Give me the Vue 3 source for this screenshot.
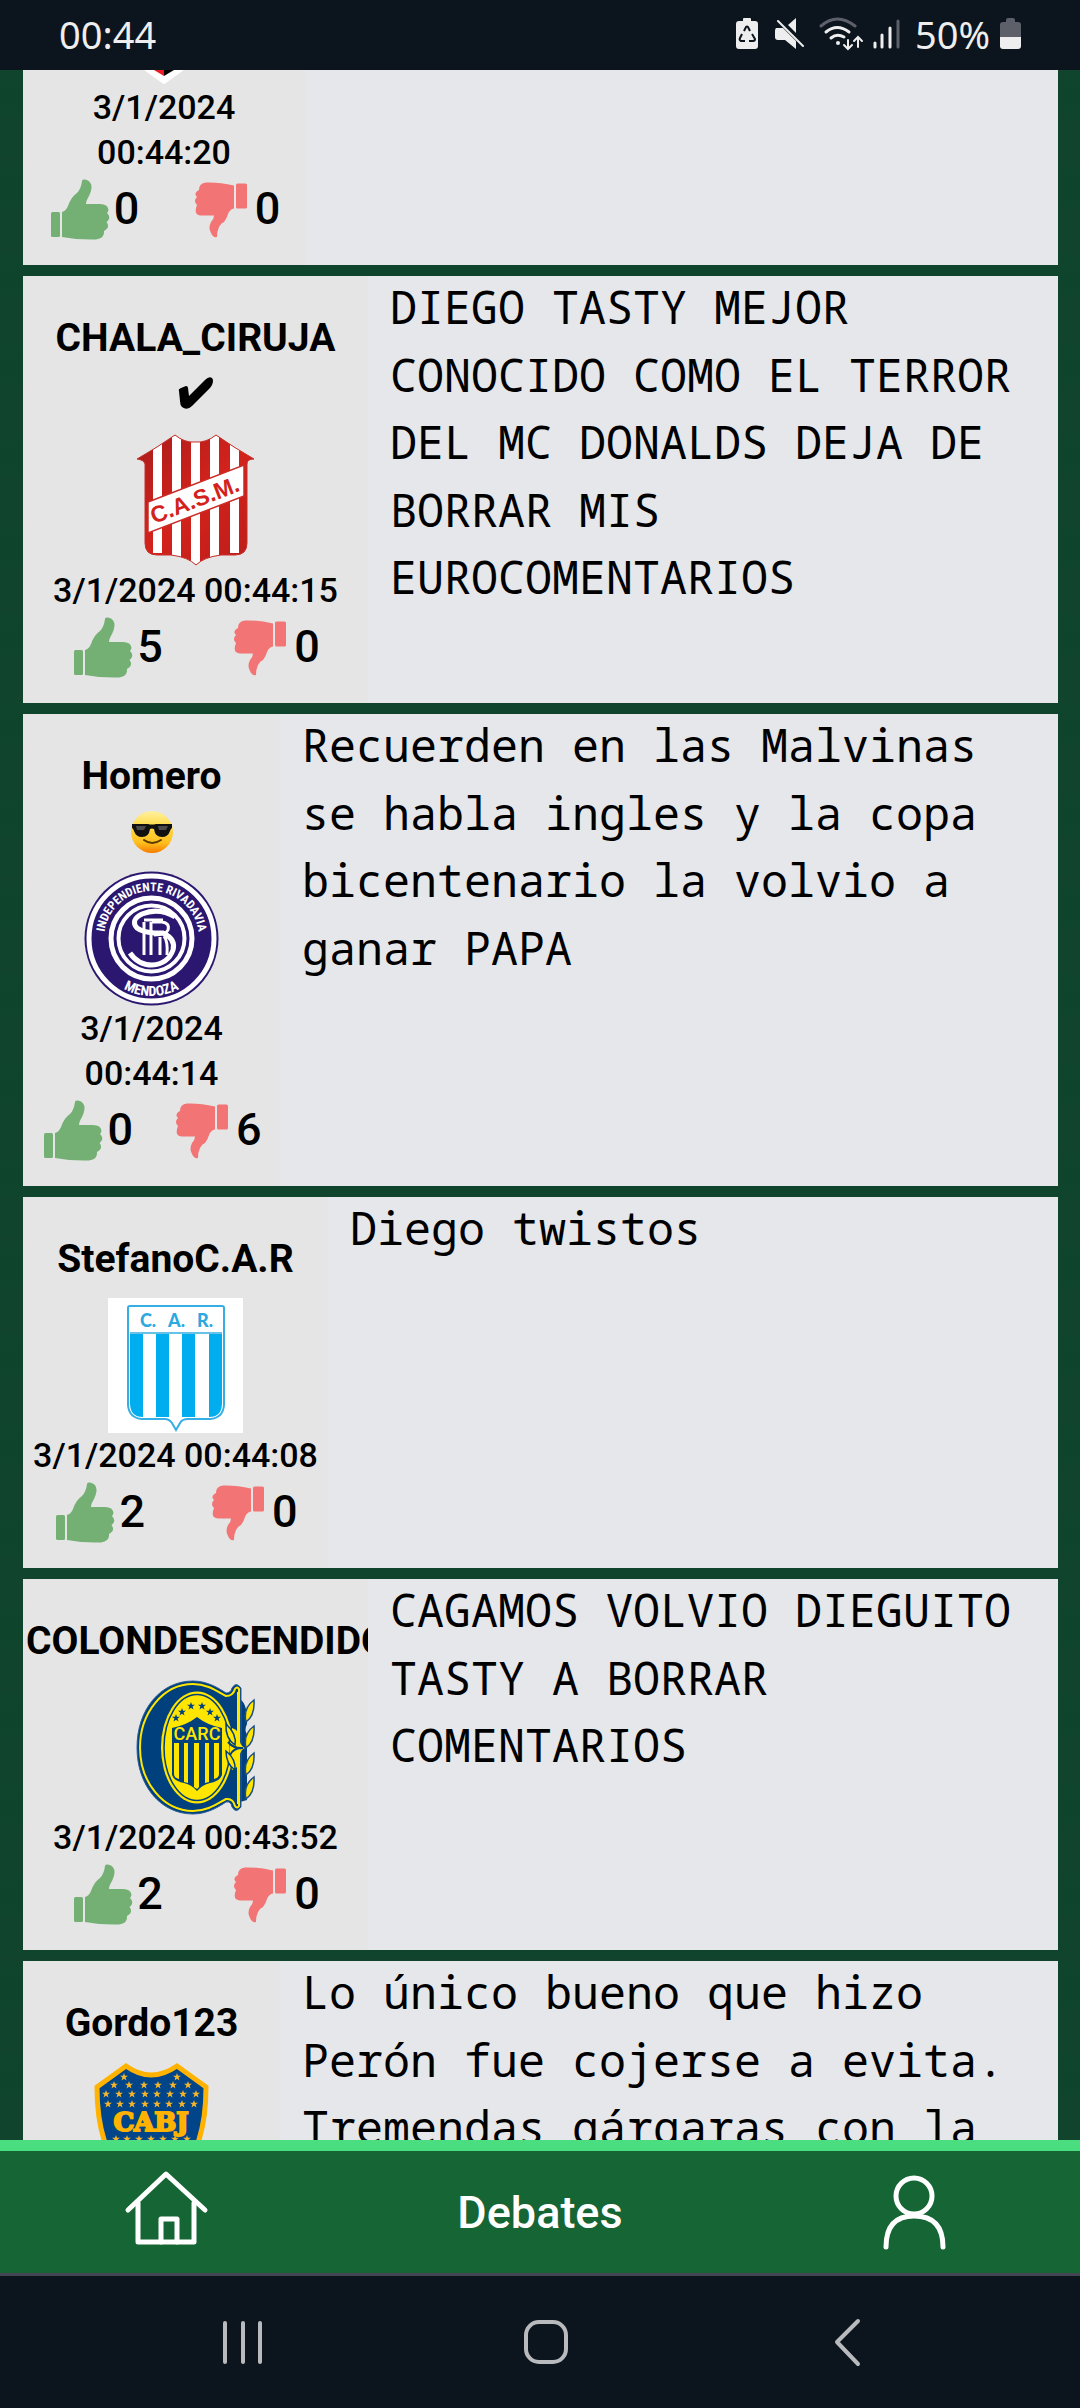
<script setup>
const posts = [
  { id: 1, crest: 'tip', date: '3/1/2024 00:44:20', up: 0, down: 0, size: 'medium', text: '' },
  {
    id: 2, name: 'CHALA_CIRUJA', badge: 'check', crest: 'casm', date: '3/1/2024 00:44:15', up: 5, down: 0, size: 'full',
    text: 'DIEGO TASTY MEJOR CONOCIDO COMO EL TERROR DEL MC DONALDS DEJA DE BORRAR MIS EUROCOMENTARIOS',
  },
  {
    id: 3, name: 'Homero', badge: 'cool', crest: 'rivadavia', date: '3/1/2024 00:44:14', up: 0, down: 6, size: 'small',
    text: 'Recuerden en las Malvinas se habla ingles y la copa bicentenario la volvio a ganar PAPA',
  },
  { id: 4, name: 'StefanoC.A.R', crest: 'car', date: '3/1/2024 00:44:08', up: 2, down: 0, size: 'large', text: 'Diego twistos' },
  {
    id: 5, name: 'COLONDESCENDIDO', crest: 'carc', date: '3/1/2024 00:43:52', up: 2, down: 0, size: 'full',
    text: 'CAGAMOS VOLVIO DIEGUITO TASTY A BORRAR COMENTARIOS',
  },
  {
    id: 6, name: 'Gordo123', crest: 'boca', date: '', up: null, down: null, size: 'small',
    text: 'Lo único bueno que hizo Perón fue cojerse a evita. Tremendas gárgaras con la',
  },
]

const star = 'M0 -4L1 -1.3L4 -1.2L1.6 .6L2.5 3.5L0 1.8L-2.5 3.5L-1.6 .6L-4 -1.2L-1 -1.3Z'
const carcStars = [[48, 38], [54, 32], [63, 26], [74, 26], [82, 32], [89, 38]]
const row = (y, xs) => xs.map((x) => [x, y])
const bocaStars = [
  ...row(15, [40, 93]),
  ...row(23, [30, 45, 60, 74, 89, 104]),
  ...row(32, [22, 35, 48, 61, 73, 86, 99, 112]),
  ...row(42, [24, 36, 48, 61, 73, 85, 98, 110]),
  ...row(77, [32, 43, 55, 67, 79, 91, 103]),
]
</script>

<template>
  <div class="phone">
    <header class="status">
      <time class="clock">00:44</time>
      <div class="indicators">
        <svg width="24" height="34" viewBox="0 0 24 34" aria-hidden="true">
          <path d="M7 4V2q0-1 1-1h6q1 0 1 1v2h4q3 0 3 3v22q0 3-3 3H3q-3 0-3-3V7q0-3 3-3z" fill="#eee" />
          <g fill="none" stroke="#0c141d" stroke-width="2">
            <path d="M8 14l2-4q1-1 2 0l2 4" />
            <path d="M16 17l3 5q0 2-2 2h-4" />
            <path d="M9 24H5q-2-1-1-3l2-4" />
          </g>
        </svg>
        <svg width="29" height="34" viewBox="0 0 29 34" aria-hidden="true">
          <path d="M13 8l8-7v15z" fill="#eee" />
          <path d="M3 4l25 25" stroke="#eee" stroke-width="2" stroke-linecap="round" />
          <path d="M1 11h7l13 13v8l-11-9H3q-3 0-3-3v-6q0-2 1-3z" fill="#eee" />
        </svg>
        <svg width="81" height="34" viewBox="0 0 81 34" fill="none" stroke="#eee" stroke-width="3" stroke-linecap="round" aria-hidden="true">
          <path d="M2 9Q18-5 36 9" stroke="#5d6068" />
          <path d="M7 15q11-9 23 0" />
          <path d="M12 21q6-5 13-1" />
          <circle cx="19" cy="26" r="2" fill="#eee" stroke="none" />
          <path d="M29 23v9M25 28l4 4l4-4M39 30V20M35 24l4-4l4 4" stroke-width="2" />
          <path d="M56 26v4M63 18v12M71 11v19" />
          <path d="M79 4v26" stroke="#5d6068" />
        </svg>
        <span class="battery">
          50%
          <svg width="21" height="34" viewBox="0 0 21 34" aria-hidden="true">
            <path d="M6 5V3q0-2 2-2h5q2 0 2 2v2h3q3 0 3 3v12H0V8q0-3 3-3z" fill="#5d6068" />
            <path d="M0 20h21v9q0 3-3 3H3q-3 0-3-3z" fill="#eee" />
          </svg>
        </span>
      </div>
    </header>

    <main class="feed">
      <article v-for="post in posts" :key="post.id" class="post">
        <div class="author" :class="[post.size, { partial: !post.name }]">
          <h2 v-if="post.name" class="name">
            {{ post.name }}
            <span v-if="post.badge" class="badge">
              <svg v-if="post.badge === 'check'" width="36" height="34" viewBox="0 0 36 34" role="img" aria-label="Verificado">
                <path d="M1 14Q0 12 3 11L8 9Q10 9 10 11L11 19L27 3Q31-1 34 1Q36 3 34 8Q33 10 31 12L14 29Q9 34 4 30Q2 28 2 24Z" />
              </svg>
              <svg v-else width="42" height="44" viewBox="0 0 42 44" role="img" aria-label="Lentes de sol">
                <defs>
                  <linearGradient id="face" x1="0" y1="0" x2="0" y2="1">
                    <stop offset="0" stop-color="#fff0a0" />
                    <stop offset=".35" stop-color="#ffdc4a" />
                    <stop offset=".75" stop-color="#ffbf1f" />
                    <stop offset="1" stop-color="#f57c00" />
                  </linearGradient>
                </defs>
                <circle cx="21" cy="22" r="21" fill="url(#face)" />
                <path d="M1 14h16q4 1 8 0h16v4q-1 0-2 3q-2 6-8 6q-7 0-8-8q-2-1-4 0q-1 8-8 8q-6 0-8-6q-1-3-2-3z" fill="#111" />
                <path d="M5 16h10l-2 4H6zM27 16h10l-2 4h-7z" fill="#4a4a4a" />
                <path d="M13 30q8 6 17 0" fill="none" stroke="#5d3a00" stroke-width="2" stroke-linecap="round" />
              </svg>
            </span>
          </h2>

          <svg v-if="post.crest === 'tip'" class="crest tip" viewBox="0 0 135 15" role="img" aria-label="Escudo">
            <path d="M47 0H87L69 13Q67 15 65 13Z" fill="#fff" />
            <path d="M57 0H67V6Z" fill="#ed1c24" />
            <path d="M67 0H77L67 6Z" />
          </svg>

          <svg v-else-if="post.crest === 'casm'" class="crest" viewBox="0 0 135 135" role="img" aria-label="Escudo C.A.S.M.">
            <defs>
              <clipPath id="casm-shape">
                <path d="M9 26L29 14L47 2Q57 10 67 9Q78 10 88 2L106 14L126 26Q119 26 119 31V110Q119 122 107 122H93Q76 124 68 132Q60 124 43 122H29Q17 122 17 110V31Q16 27 9 26Z" />
              </clipPath>
              <linearGradient id="casm-red" x1="0" y1="0" x2="1" y2="1">
                <stop offset="0" stop-color="#a51c1a" />
                <stop offset=".5" stop-color="#d3221c" />
                <stop offset="1" stop-color="#b91d1a" />
              </linearGradient>
            </defs>
            <g clip-path="url(#casm-shape)">
              <rect width="135" height="135" fill="url(#casm-red)" />
              <path d="M25 0h9v120h-9zM44 0h9v135h-9zM63 0h9v135h-9zM82 0h9v135h-9zM102 0h9v120h-9z" fill="#fff" />
            </g>
            <path d="M9 26L29 14L47 2Q57 10 67 9Q78 10 88 2L106 14L126 26Q119 26 119 31V110Q119 122 107 122H93Q76 124 68 132Q60 124 43 122H29Q17 122 17 110V31Q16 27 9 26Z" fill="none" stroke="#c8302b" />
            <path d="M20 69L116 32V63L20 100Z" fill="#fff" stroke="#cc2a26" stroke-width="1.5" />
            <text x="26" y="91" transform="rotate(-21 26 91)" font-family="Liberation Sans, Arial, sans-serif" font-weight="700" font-size="23" fill="#d3221c">C.A.S.M.</text>
          </svg>

          <svg v-else-if="post.crest === 'rivadavia'" class="crest" viewBox="0 0 135 135" role="img" aria-label="Escudo Independiente Rivadavia">
            <defs>
              <path id="arc-top" d="M20 67.5A47.5 47.5 0 0 1 115 67.5" />
              <path id="arc-bottom" d="M10 67.5A57.5 57.5 0 0 0 125 67.5" />
            </defs>
            <circle cx="67.5" cy="67.5" r="67" fill="#2b1770" />
            <g fill="none" stroke="#fff">
              <circle cx="67.5" cy="67.5" r="62.5" stroke-width="5" />
              <circle cx="67.5" cy="67.5" r="40.5" stroke-width="5" />
              <circle cx="67.5" cy="67.5" r="33" stroke-width="4" />
              <path d="M91 46Q75 36 58 43Q46 49 53 57Q58 61 70 62H79Q92 68 89 79Q84 93 68 94Q54 94 46 82" stroke-width="5" />
              <path d="M79 49H60M60 51V84M67 51V84M68 51H78Q86 52 84 59Q82 64 70 64M80 65Q84 70 83 84M76 66V84" stroke-width="3" />
            </g>
            <g class="ring-text">
              <text font-size="12"><textPath href="#arc-top" startOffset="50%" text-anchor="middle">INDEPENDIENTE RIVADAVIA</textPath></text>
              <text font-size="14"><textPath href="#arc-bottom" startOffset="50%" text-anchor="middle">MENDOZA</textPath></text>
            </g>
          </svg>

          <svg v-else-if="post.crest === 'car'" class="crest" viewBox="0 0 135 135" role="img" aria-label="Escudo C.A.R.">
            <rect width="135" height="135" fill="#fff" />
            <path d="M22 36h13v83q-13 0-13-14zM48 36h13v83h-13zM74 36h13v83h-13zM101 36h13v69q0 14-13 14z" fill="#00aeef" />
            <path d="M20 10Q20 8 22 8H114Q116 8 116 10V107Q115 120 102 121H80Q74 121 72 125L68 132L64 125Q61 121 57 121H34Q21 120 20 107Z" fill="none" stroke="#35aee3" stroke-width="2" />
            <path d="M22 35H114" stroke="#35aee3" stroke-width="1.5" />
            <g font-family="Lato, sans-serif" font-weight="900" font-size="18" fill="#2ea9e0">
              <text x="32" y="29">C.</text>
              <text x="60" y="29">A.</text>
              <text x="89" y="29">R.</text>
            </g>
          </svg>

          <svg v-else-if="post.crest === 'carc'" class="crest" viewBox="0 0 135 135" role="img" aria-label="Escudo C.A.R.C.">
            <path d="M110 18Q120 22 119 44Q116 50 119 55V120L112 122Z" fill="#00407c" />
            <g fill="#ffe600" stroke="#1c4d84" stroke-width="1.5">
              <path d="M126 20Q127 36 118 42Q115 28 126 20ZM126 46Q127 62 118 68Q115 54 126 46ZM126 73Q127 89 118 95Q115 81 126 73ZM126 97Q127 113 118 119Q115 105 126 97Z" />
            </g>
            <path d="M65 1C80 1 92 9 98 13Q103 13 104 8Q108 1 113 8V127Q108 134 104 127Q103 121 98 122C92 126 80 134 65 134C32 134 9 105 9 67.5C9 30 32 1 65 1Z" fill="#00407c" stroke="#2a5f9c" />
            <path d="M65 4C80 4 90 12 98 16Q105 16 107 9Q109 6 111 9V126Q109 129 107 126Q105 118 98 119C90 123 80 131 65 131C35 131 12 102 12 67.5C12 33 35 4 65 4Z" fill="none" stroke="#ffe600" stroke-width="2" />
            <ellipse cx="69" cy="67.5" rx="36" ry="56" fill="#ffe600" />
            <ellipse cx="69" cy="67.5" rx="33" ry="53" fill="none" stroke="#00407c" stroke-width="1.5" />
            <path d="M104 48Q112 50 111 60V77Q112 88 104 90Q99 68 104 48Z" fill="#ffe600" />
            <path d="M110 12V54Q110 65 115 68Q110 71 110 82V124" fill="none" stroke="#ffe600" stroke-width="2" />
            <path d="M98 44Q97 58 107 65Q109 54 98 44ZM98 71Q98 84 107 90Q108 79 98 71Z" fill="#ffe600" stroke="#00407c" stroke-width="1.5" />
            <path d="M100 62Q106 69 115 68Q106 67 102 75" fill="none" stroke="#00407c" stroke-width="2" />
            <path d="M44 48Q59 45 69 37Q79 45 94 48V95Q92 101 82 103Q74 105 69 111Q64 105 56 103Q46 101 44 95Z" fill="#00407c" />
            <path d="M46 63h5v36q-5-1-5-5zM56 63h4v40l-4-1zM66 63h5v44l-2 2l-3-2zM77 63h4v39l-4 1zM86 63h5v31q0 4-5 5z" fill="#ffe600" />
            <text x="69" y="60" text-anchor="middle" font-family="Roboto, sans-serif" font-weight="500" font-size="18" fill="#ffe600">CARC</text>
            <path v-for="([x, y], i) in carcStars" :key="i" :d="star" :transform="`translate(${x} ${y})`" fill="#00407c" />
          </svg>

          <svg v-else class="crest" viewBox="0 0 135 135" role="img" aria-label="Escudo CABJ">
            <path d="M42 4Q67 22 93 4L122 25Q122 110 67.5 131Q13 110 13 25Z" fill="#00448a" stroke="#ffb300" stroke-width="5" />
            <path v-for="([x, y], i) in bocaStars" :key="i" :d="star" :transform="`translate(${x} ${y})`" fill="#f5b52a" />
            <text x="67" y="69" text-anchor="middle" font-family="DejaVu Serif, serif" font-weight="700" font-size="26" fill="#ffb300" stroke="#ffb300" stroke-width="2">CABJ</text>
          </svg>

          <time v-if="post.date" class="date">{{ post.date }}</time>

          <div v-if="post.up !== null" class="votes">
            <button class="vote" type="button" aria-label="Me gusta">
              <svg width="66" height="66" viewBox="0 0 66 66" fill="#74b074" aria-hidden="true">
                <rect x="3" y="36" width="9" height="25" rx="1.5" />
                <path d="M14 36Q18 35 20 30Q23 21 29 17Q33 13 34 5Q34 3 37 3.500Q44 5 43.500 12Q43 16 41 20Q38 25 38 28H52Q60 28 60.500 34Q60 36 59 37Q62 40 61 43Q60 45 58.500 46Q61 49 59.500 52Q58 54 56 55Q57 62 48 63.500Q30 64 14 61Z" />
              </svg>
              <span>{{ post.up }}</span>
            </button>
            <button class="vote" type="button" aria-label="No me gusta">
              <svg width="66" height="66" viewBox="0 0 66 66" fill="#f27474" aria-hidden="true">
                <rect x="47" y="7.500" width="11" height="25" rx="1.500" />
                <path d="M45 9.500Q30 6 17 6.500Q10 7 10 14Q6 16 6.500 19L8 21Q5 24 6.500 27L8 29Q4 39 12 39.500H25Q25 43 22 46Q19 52 22 57Q24 62 28 61Q28 55 30 51Q32 47 35 46Q38 42 39 38Q41 33 45 32.500Z" />
              </svg>
              <span>{{ post.down }}</span>
            </button>
          </div>
        </div>
        <p class="message">{{ post.text }}</p>
      </article>
    </main>

    <nav class="tabs">
      <a class="tab" href="#inicio" aria-label="Inicio">
        <svg width="90" height="84" viewBox="0 0 90 84" fill="none" stroke="#fff" stroke-width="5" stroke-linecap="round" stroke-linejoin="round" aria-hidden="true">
          <path d="M7 40L45 4L84 40" />
          <path d="M17 33V72H73V33" />
          <path d="M40 72V49H56V72" />
        </svg>
      </a>
      <a class="tab" href="#debates">Debates</a>
      <a class="tab" href="#perfil" aria-label="Perfil">
        <svg width="90" height="84" viewBox="0 0 90 84" fill="none" stroke="#fff" stroke-width="5" stroke-linecap="round" aria-hidden="true">
          <circle cx="45" cy="26" r="18" />
          <path d="M17 77Q17 46 45 46Q74 46 74 77" />
        </svg>
      </a>
    </nav>

    <footer class="system">
      <button type="button" aria-label="Recientes">
        <svg width="60" height="60" viewBox="0 0 60 60" stroke="#b9babd" stroke-width="4" stroke-linecap="round"><path d="M12 11V50M30 11V50M47 11V50" /></svg>
      </button>
      <button type="button" aria-label="Pantalla de inicio">
        <svg width="60" height="60" viewBox="0 0 60 60" fill="none" stroke="#b9babd" stroke-width="4"><rect x="10" y="10" width="40" height="40" rx="13" /></svg>
      </button>
      <button type="button" aria-label="Volver">
        <svg width="60" height="60" viewBox="0 0 60 60" fill="none" stroke="#b9babd" stroke-width="4" stroke-linecap="round" stroke-linejoin="round"><path d="M40 9L19 30L40 52" /></svg>
      </button>
    </footer>
  </div>
</template>

<style>
body {
  margin: 0;
  background: #0c141d;
}
</style>

<style scoped>
.phone {
  display: flex;
  flex-direction: column;
  height: 100vh;
  font-family: Roboto, sans-serif;
  color: #000;
}
svg {
  display: block;
  flex: none;
}
button {
  padding: 0;
  border: 0;
  background: none;
  color: inherit;
  font: inherit;
}
.status {
  display: flex;
  align-items: center;
  justify-content: space-between;
  flex: none;
  height: 70px;
  padding: 0 59px 2px;
  box-sizing: border-box;
  background: #0c141d;
  color: #eee;
  font-family: "Noto Sans", sans-serif;
  font-size: 38px;
}
.indicators {
  display: flex;
  align-items: center;
  gap: 15px;
}
.battery {
  display: flex;
  align-items: center;
  gap: 10px;
}
.feed {
  display: flex;
  flex-direction: column;
  flex: 1;
  min-height: 0;
  gap: 11px;
  padding: 0 22px 0 23px;
  overflow: hidden;
  background:
    repeating-linear-gradient(0deg, #17452e44 0 3px, transparent 3px 40px, #0a452b55 60px, transparent 90px),
    #10442d;
}
.post {
  display: flex;
  flex: none;
  background: #e5e7eb;
}
.author {
  display: flex;
  flex-direction: column;
  align-items: center;
  flex: none;
  box-sizing: border-box;
  padding: 34px 0 23px;
  overflow: hidden;
  background: #e5e5e5;
}
.author.partial {
  padding-top: 0;
}
.small {
  width: 257px;
}
.medium {
  width: 282px;
}
.large {
  width: 305px;
}
.full {
  width: 345px;
}
.name {
  box-sizing: border-box;
  width: 100%;
  margin: 0 0 11px;
  padding: 0 3px;
  font-size: 39px;
  line-height: 56px;
  font-weight: 700;
  text-align: center;
}
.badge {
  display: flex;
  align-items: center;
  justify-content: center;
  height: 56px;
}
.crest {
  width: 135px;
  height: 135px;
}
.crest.tip {
  height: 15px;
}
.ring-text {
  fill: #fff;
  font-family: "Roboto Condensed", "Liberation Sans Narrow", "Liberation Sans", sans-serif;
  font-weight: 700;
}
.date {
  padding: 0 8px;
  font-size: 34px;
  line-height: 45px;
  font-weight: 500;
  text-align: center;
}
.votes {
  display: flex;
  width: 100%;
  max-width: 314px;
  height: 67px;
}
.vote {
  display: flex;
  flex: 1;
  align-items: center;
  justify-content: center;
  font-size: 45px;
  font-weight: 500;
}
.message {
  flex: 1;
  min-width: 0;
  margin: -3px 0 0;
  padding: 0 22px;
  font-family: "Droid Sans Mono", "Noto Sans Mono", "DejaVu Sans Mono", monospace;
  font-size: 45px;
  line-height: 1.5;
}
.tabs {
  display: flex;
  align-items: center;
  justify-content: space-between;
  flex: none;
  height: 122px;
  padding: 0 121px;
  border-top: 11px solid #4ade80;
  border-bottom: 3px solid #444654;
  background: #166534;
}
.tab {
  color: #fff;
  font-size: 45px;
  font-weight: 500;
  text-decoration: none;
}
.system {
  display: flex;
  align-items: center;
  justify-content: space-between;
  flex: none;
  height: 132px;
  padding: 0 202px 0 213px;
  background: #0c141d;
}
</style>
